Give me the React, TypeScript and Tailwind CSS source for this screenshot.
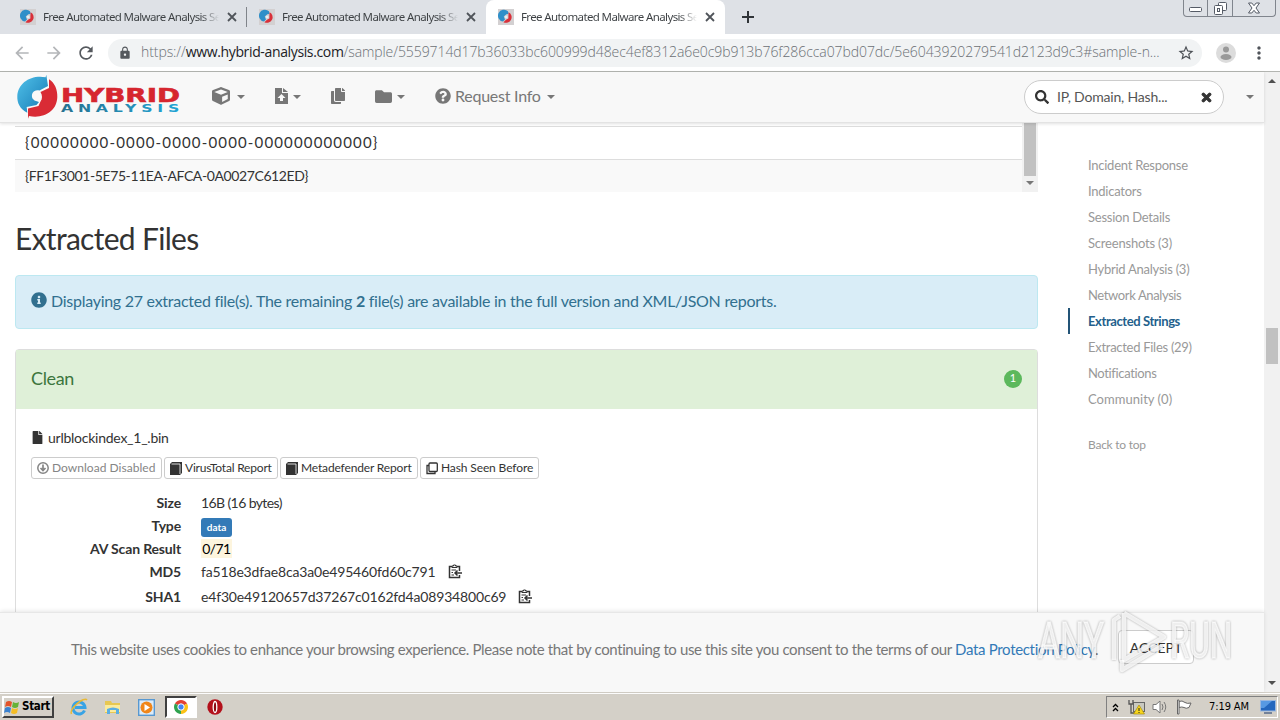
import type { ReactNode } from "react";
import {
  FaCopy,
  FaCube,
  FaFile,
  FaFolder,
  FaInfoCircle,
  FaQuestionCircle,
  FaSearch,
  FaTimes,
} from "react-icons/fa";
import {
  MdArrowBack,
  MdArrowForward,
  MdLock,
  MdMoreVert,
  MdRefresh,
  MdStarBorder,
} from "react-icons/md";

const tabs = [
  { title: "Free Automated Malware Analysis Se", active: false },
  { title: "Free Automated Malware Analysis Se", active: false },
  { title: "Free Automated Malware Analysis Se", active: true },
];

const sections = [
  { label: "Incident Response", spacing: "tracking-[-0.25px]" },
  { label: "Indicators", spacing: "tracking-[-0.25px]" },
  { label: "Session Details", spacing: "tracking-[-0.25px]" },
  { label: "Screenshots (3)", spacing: "tracking-[-0.2px]" },
  { label: "Hybrid Analysis (3)", spacing: "tracking-[-0.25px]" },
  { label: "Network Analysis", spacing: "tracking-[-0.38px]" },
  { label: "Extracted Strings", spacing: "tracking-[-0.4px]", active: true },
  { label: "Extracted Files (29)", spacing: "tracking-[-0.28px]" },
  { label: "Notifications", spacing: "tracking-[-0.35px]" },
  { label: "Community (0)", spacing: "tracking-[0.03px]" },
];

const SiteIcon = () => (
  <svg width="16" height="16" viewBox="0 0 16 16" className="shrink-0">
    <rect width="16" height="16" fill="#d3d0d1" />
    <path d="M10 2.2A6 6 0 1 0 5 12.6L7 10.4 5.8 7.6 8.4 5.2 10.6 5z" fill="#2f8fc9" />
    <path d="M10.6 3.2A5.6 5.6 0 1 1 5.4 13.2L8 10.8 10.4 9.6 10.4 6.8z" fill="#d9303a" />
    <circle cx="8.2" cy="8" r="1.3" fill="#dff1fa" />
  </svg>
);

const Caret = ({ className = "" }: { className?: string }) => (
  <svg width="8" height="4" viewBox="0 0 8 4" className={`shrink-0 ${className}`}>
    <path d="M0 0H8L4 4z" fill="#777" />
  </svg>
);

const TabStrip = () => (
  <div className="flex h-[34px] shrink-0 justify-between bg-[#dee1e6]">
    <div className="flex pl-2">
      {tabs.map((tab, i) => (
        <div
          key={i}
          className={`flex h-[34px] w-[239px] items-center pr-3 pl-3 ${
            tab.active ? "rounded-t-lg bg-white" : i === 0 ? "relative" : ""
          }`}
        >
          <SiteIcon />
          <span className="ml-[7px] w-[176px] shrink-0 overflow-hidden bg-gradient-to-r from-[#3c4043] from-90% to-transparent bg-clip-text font-['Noto_Sans'] text-[11.5px] tracking-[-0.62px] whitespace-nowrap text-transparent">
            {tab.title}
          </span>
          <svg width="10" height="10" viewBox="0 0 10 10" className="ml-2 shrink-0">
            <path d="M1 1L9 9M9 1L1 9" stroke="#50545a" strokeWidth="1.8" />
          </svg>
          {i === 0 && <span className="absolute right-0 h-5 w-px bg-[#80848a]" />}
        </div>
      ))}
      <svg width="12" height="12" viewBox="0 0 12 12" className="mt-[11px] ml-[17px]">
        <path d="M6 0V12M0 6H12" stroke="#303438" strokeWidth="2" />
      </svg>
    </div>
    <div className="mr-[4px] flex h-[17px] w-[93px] rounded-b border border-t-0 border-[#80858d]">
      <div className="flex w-6 items-center justify-center border-r border-[#80858d]">
        <svg width="13" height="5" viewBox="0 0 13 5" className="mt-[3px]">
          <rect x=".5" y=".5" width="12" height="4" rx="1" fill="#fff" stroke="#555b66" />
        </svg>
      </div>
      <div className="flex w-[25px] items-center justify-center border-r border-[#80858d]">
        <svg width="13" height="13" viewBox="0 0 13 13" fill="#fff" stroke="#555b66">
          <rect x="4.5" y=".5" width="8" height="8" rx="1" />
          <rect x=".5" y="3.5" width="8" height="9" rx="1" />
          <rect x="3.5" y="6.5" width="2" height="3" />
        </svg>
      </div>
      <div className="flex flex-1 items-center justify-center">
        <svg width="12" height="12" viewBox="0 0 12 12">
          <path d="M.5 1H3.8L6 3.7 8.2 1H11.5L8 6 11.5 11H8.2L6 8.3 3.8 11H.5L4 6z" fill="#fff" stroke="#555b66" />
        </svg>
      </div>
    </div>
  </div>
);

const AddressBar = () => (
  <div className="flex h-[38px] shrink-0 items-center border-b border-[#b3b5b1] bg-white">
    <MdArrowBack className="ml-3 text-[#b4b6b9]" size={20} />
    <MdArrowForward className="ml-3 text-[#b4b6b9]" size={20} />
    <MdRefresh className="ml-3 text-[#55595e]" size={20} />
    <div className="ml-3 flex h-[28px] w-[1094px] items-center rounded-full bg-[#f1f3f4]">
      <MdLock className="ml-2.5 shrink-0 text-[#55595e]" size={14} />
      <div className="-mt-0.5 ml-[9px] w-[1036px] font-['Open_Sans'] text-[14px] font-light tracking-[-0.08px] whitespace-nowrap text-[#6b7075]">
        https://<span className="font-normal tracking-[-0.36px] text-[#202124]">www.hybrid-analysis.com</span>
        /sample/5559714d17b36033bc600999d48ec4ef8312a6e0c9b913b76f286cca07bd07dc/5e6043920279541d2123d9c3#sample-n...
      </div>
      <MdStarBorder className="shrink-0 text-[#4d5156]" size={18} />
    </div>
    <svg width="20" height="20" viewBox="0 0 20 20" className="ml-[14px]">
      <circle cx="10" cy="10" r="10" fill="#dcdcdc" />
      <circle cx="10" cy="6.5" r="3" fill="#999" />
      <ellipse cx="10" cy="14" rx="5.5" ry="3" fill="#999" />
    </svg>
    <MdMoreVert className="ml-[13px] text-[#50545a]" size={20} />
  </div>
);

const Logo = () => (
  <svg width="166" height="46" viewBox="0 0 166 46" className="shrink-0">
    <defs>
      <linearGradient id="blue" x1="0" y1="0" x2="1" y2="1">
        <stop offset="0" stopColor="#52c2ea" />
        <stop offset="1" stopColor="#1479b4" />
      </linearGradient>
      <linearGradient id="teal" x1="0" y1="0" x2="1" y2="0">
        <stop offset="0" stopColor="#27718f" />
        <stop offset="1" stopColor="#22a6d8" />
      </linearGradient>
    </defs>
    <path
      d="M30.3 .7L32 12 23.5 16.5C18 15 14.5 19.5 16.5 24.5L18.5 26.5 23 28 20.5 31 10.7 33 11.3 38.7C4 35 1 29 1.3 22 2 9 15 .5 29.6 3.3z"
      fill="url(#blue)"
    />
    <path
      d="M33 5.3C39 9 41.5 16 41.3 23 41 37 28 45 13 42L12 44.7 12 34.5 22.5 32 24.5 27.5C26.5 25 26.5 21 24.5 18L33 14z"
      fill="#d92b35"
    />
    <g fontFamily="DejaVu Sans" fontWeight="700">
      <text
        x="45"
        y="27.5"
        fontSize="20"
        textLength="119"
        lengthAdjust="spacingAndGlyphs"
        fill="#d6262f"
        stroke="#d6262f"
        strokeWidth=".6"
      >
        HYBRID
      </text>
      <text
        x="45"
        y="37.5"
        fontSize="10"
        letterSpacing="3"
        textLength="123"
        lengthAdjust="spacingAndGlyphs"
        fill="url(#teal)"
      >
        ANALYSIS
      </text>
    </g>
  </svg>
);

const NavBar = () => (
  <header className="relative z-10 flex h-[51px] shrink-0 items-center border-b border-[#e3e3e3] bg-[#f8f8f8] text-[#777] shadow-[0_1px_3px_rgba(0,0,0,0.12)]">
    <div className="w-[212px] pl-[16px]">
      <Logo />
    </div>
    <FaCube size={18} className="-mt-0.5" />
    <Caret className="ml-[7px]" />
    <svg width="13" height="16" viewBox="0 0 13 16" className="-mt-0.5 ml-[30px]">
      <path
        fillRule="evenodd"
        fill="#777"
        d="M0 0H7V5H13V16H0zM6.5 6L2.5 10H5V13H8V10H10.5zM8 0L13 4H8z"
      />
    </svg>
    <Caret className="ml-[5px]" />
    <FaCopy size={16} className="-mt-0.5 ml-[29px]" />
    <FaFolder size={17} className="-mt-0.5 ml-[29px]" />
    <Caret className="ml-[5px]" />
    <FaQuestionCircle size={16} className="-mt-0.5 ml-[30px]" />
    <span className="-mt-0.5 ml-1 w-[88px] text-[16px] tracking-[-0.25px] whitespace-nowrap">Request Info</span>
    <Caret className="ml-1" />
    <div className="ml-[469px] flex h-[34px] w-[200px] items-center rounded-full border border-[#ccc] bg-white pr-[10px] pl-[10px]">
      <FaSearch size={14} className="text-[#333]" />
      <span className="-mt-0.5 ml-2 flex-1 text-[14px] tracking-[-0.18px] text-[#555]">IP, Domain, Hash...</span>
      <FaTimes size={13} className="text-[#333]" stroke="#333" strokeWidth={40} />
    </div>
    <Caret className="ml-[22px]" />
  </header>
);

const SmallButton = ({
  icon,
  muted = false,
  className,
  children,
}: {
  icon: ReactNode;
  muted?: boolean;
  className: string;
  children: ReactNode;
}) => (
  <button
    className={`flex h-[22px] items-center gap-[3px] rounded-[3px] border border-[#ccc] pl-[5px] text-[12px] whitespace-nowrap ${
      muted ? "text-[#858585]" : "text-[#333]"
    } ${className}`}
  >
    {icon}
    <span>{children}</span>
  </button>
);

const BookIcon = () => (
  <svg width="12" height="13" viewBox="0 0 12 13" className="shrink-0">
    <path d="M2 0H12V11L10 13H0V2z" fill="#333" />
    <path d="M1.5 2H10V12" fill="none" stroke="#fff" strokeWidth=".8" />
  </svg>
);

const ClipboardIcon = () => (
  <svg width="14" height="15" viewBox="0 0 14 15" fill="none" stroke="#333" className="ml-[11px]">
    <path d="M11.5 7V2.5H1.5V13.5H11.5V11" strokeWidth="1.5" />
    <path d="M4 3.5V2H5.5V1H7.5V2H9V3.5z" fill="#fff" />
    <path d="M3.5 6H8M3.5 8.5H5M3.5 11H6" strokeWidth="1" />
    <path d="M14 9H7M9.5 6.5L7 9 9.5 11.5" strokeWidth="1.5" />
  </svg>
);

const DetailRow = ({
  label,
  className = "h-[23px]",
  children,
}: {
  label: string;
  className?: string;
  children: ReactNode;
}) => (
  <div className={`flex items-center ${className}`}>
    <dt className="w-[150px] text-right font-bold tracking-[-0.15px] whitespace-nowrap">{label}</dt>
    <dd className="ml-5 flex items-center whitespace-nowrap">{children}</dd>
  </div>
);

const Results = () => (
  <div className="w-[1023px] shrink-0 text-[14px] text-[#333]">
    <div className="flex h-[69px]">
      <div className="w-[1007px] pt-[3px]">
        <div className="flex h-[33px] items-center border-t border-[#ddd] pb-0.5 pl-[10px]">
          <span className="text-[15px] tracking-[1.15px]">{"{00000000-0000-0000-0000-000000000000}"}</span>
        </div>
        <div className="flex h-[33px] items-center border-t border-[#ddd] bg-[#f9f9f9] pb-0.5 pl-[10px]">
          <span className="tracking-[-0.4px]">{"{FF1F3001-5E75-11EA-AFCA-0A0027C612ED}"}</span>
        </div>
      </div>
      <div className="flex w-4 flex-col items-center bg-[#f1f1f1]">
        <div className="h-[53px] w-3 bg-[#c1c1c1]" />
        <Caret className="mt-[5px]" />
      </div>
    </div>

    <h2 className="mt-[26px] h-[40px] text-[30px] leading-[40px] tracking-[-0.7px]">Extracted Files</h2>

    <div className="mt-[17px] flex h-[54px] items-center rounded border border-[#bce8f1] bg-[#d9edf7] pl-[15px] text-[#31708f]">
      <FaInfoCircle size={16} className="-mt-1" />
      <span className="-mt-0.5 ml-1 text-[16px] tracking-[-0.27px] whitespace-nowrap">
        Displaying 27 extracted file(s). The remaining <b>2</b> file(s) are available in the full version and
        XML/JSON reports.
      </span>
    </div>

    <div className="mt-5 h-[280px] rounded-t border border-[#ddd]">
      <div className="flex h-[59px] items-center justify-between bg-[#dff0d8] px-[15px] pb-0.5 text-[#3c763d]">
        <span className="text-[18px] tracking-[-0.35px]">Clean</span>
        <span className="flex size-[18px] items-center justify-center rounded-full bg-[#5cb85c] text-[11px] text-white">
          1
        </span>
      </div>
      <div className="px-[15px] pt-[17px]">
        <div className="flex h-6 items-center">
          <FaFile size={13} className="-mt-0.5" />
          <span className="-mt-px ml-1 tracking-[-0.25px]">urlblockindex_1_.bin</span>
        </div>
        <div className="mt-[7px] flex">
          <SmallButton
            muted
            className="w-[131px] tracking-[0.03px]"
            icon={
              <svg width="12" height="12" viewBox="0 0 12 12" fill="none" stroke="currentColor">
                <circle cx="6" cy="6" r="5.2" strokeWidth="1.5" />
                <path d="M6 2.5V8M3.5 6L6 8.5 8.5 6" strokeWidth="1.7" />
              </svg>
            }
          >
            Download Disabled
          </SmallButton>
          <SmallButton className="ml-[2px] w-[114px] tracking-[-0.2px]" icon={<BookIcon />}>
            VirusTotal Report
          </SmallButton>
          <SmallButton className="ml-[2px] w-[138px] tracking-[-0.15px]" icon={<BookIcon />}>
            Metadefender Report
          </SmallButton>
          <SmallButton
            className="ml-[2px] w-[119px] tracking-[-0.12px]"
            icon={
              <svg width="12" height="13" viewBox="0 0 12 13" fill="none" stroke="#333" strokeWidth="1.3">
                <rect x="3" y="1" width="8.3" height="8.5" rx="1" />
                <path d="M3 3.5H1V11.5H9V9.5" />
              </svg>
            }
          >
            Hash Seen Before
          </SmallButton>
        </div>
        <dl className="mt-[12px]">
          <DetailRow label="Size">
            <span className="tracking-[-0.6px]">16B (16 bytes)</span>
          </DetailRow>
          <DetailRow label="Type">
            <span className="mt-[3px] flex h-[19px] w-[31px] items-center justify-center rounded-[3px] bg-[#337ab7] text-[10px] font-bold text-white">
              data
            </span>
          </DetailRow>
          <DetailRow label="AV Scan Result">
            <span className="flex h-[19px] w-[31px] items-center justify-center bg-[#fdf5de] tracking-[-0.6px] text-black">
              0/71
            </span>
          </DetailRow>
          <DetailRow label="MD5">
            <span className="w-[236px] tracking-[-0.16px]">fa518e3dfae8ca3a0e495460fd60c791</span>
            <ClipboardIcon />
          </DetailRow>
          <DetailRow label="SHA1" className="h-[26px]">
            <span className="w-[306px] tracking-[-0.17px]">e4f30e49120657d37267c0162fd4a08934800c69</span>
            <ClipboardIcon />
          </DetailRow>
        </dl>
      </div>
    </div>
  </div>
);

const SectionNav = () => (
  <nav className="ml-[30px] pt-[29px] text-[13px] text-[#999]">
    {sections.map((item) => (
      <a
        key={item.label}
        className={`flex h-[26px] items-center pt-0.5 whitespace-nowrap ${item.spacing} ${
          item.active ? "border-l-2 border-[#235477] pl-[18px] font-bold text-[#235f8c]" : "pl-5"
        }`}
      >
        {item.label}
      </a>
    ))}
    <a className="mt-[23px] block pl-5 text-[12px] leading-[20px] tracking-[-0.25px]">Back to top</a>
  </nav>
);

// Watermark laid over the cookie bar
const Watermark = () => (
  <svg
    width="204"
    height="68"
    viewBox="0 0 204 68"
    className="pointer-events-none absolute right-[26px] bottom-[16px] drop-shadow-[0_0_1px_rgba(0,0,0,0.4)]"
  >
    <g fill="#fff" fillOpacity=".8" stroke="#fff" strokeOpacity=".6" strokeWidth="1.5" fontFamily="Roboto" fontSize="50">
      <text x="4" y="50" textLength="66" lengthAdjust="spacingAndGlyphs">
        ANY
      </text>
      <text x="136" y="50" textLength="62" lengthAdjust="spacingAndGlyphs">
        RUN
      </text>
    </g>
    <g fill="none" stroke="#fff" strokeOpacity=".8" strokeWidth="4.5" strokeLinejoin="round">
      <path d="M90 5L130 29 90 52 90 5" />
      <path d="M86 8L80 12V52M88 52V62L128 38" />
    </g>
  </svg>
);

const CookieBar = () => (
  <footer className="relative z-10 flex h-[80px] shrink-0 items-center border-t border-[#e7e7e7] bg-[#f8f8f8] pb-[7px] pl-[71px] text-[#777] shadow-[0_-1px_4px_rgba(0,0,0,0.1)]">
    <span className="w-[1047px] text-[15px] tracking-[-0.383px] whitespace-nowrap">
      This website uses cookies to enhance your browsing experience. Please note that by continuing to use this
      site you consent to the terms of our{" "}
      <a className="tracking-[-0.32px] text-[#337ab7]">Data Protection Policy</a>.
    </span>
    <button className="-mt-1 h-[34px] w-[76px] rounded border border-[#ccc] bg-white text-[14px] text-[#333]">
      ACCEPT
    </button>
    <Watermark />
  </footer>
);

const PageScrollbar = () => (
  <div className="flex w-4 flex-col items-center bg-[#f1f1f1]">
    <svg width="8" height="4" viewBox="0 0 8 4" className="mt-[7px]">
      <path d="M0 4H8L4 0z" fill="#505050" />
    </svg>
    <div className="mt-[245px] h-[36px] w-3 bg-[#c1c1c1]" />
    <svg width="8" height="4" viewBox="0 0 8 4" className="mt-auto mb-[7px]">
      <path d="M0 0H8L4 4z" fill="#505050" />
    </svg>
  </div>
);

const Taskbar = () => (
  <div className="flex h-[28px] shrink-0 items-center border-t border-[#d4d0c8] bg-[#d4d0c8] pt-px font-['DejaVu_Sans_Condensed','DejaVu_Sans'] text-[11px] text-black shadow-[inset_0_1px_0_#fff]">
    <button className="ml-[2px] flex h-[22px] w-[52px] items-center border-2 border-t-white border-r-[#404040] border-b-[#404040] border-l-white font-bold">
      <svg width="16" height="16" viewBox="0 0 16 16" className="shrink-0">
        <path d="M2 3Q5 1 8 3L7 8Q4 6 1 8z" fill="#e3542b" />
        <path d="M9 3Q12 5 15 3L14 8Q11 10 8 8z" fill="#65b237" />
        <path d="M1 9Q4 7 7 9L6 14Q3 12 0 14z" fill="#3b82d0" />
        <path d="M8 9Q11 11 14 9L13 14Q10 16 7 14z" fill="#f4bd25" />
      </svg>
      <span className="ml-0.5 text-[11.5px] tracking-[-0.3px]">Start</span>
    </button>
    {/* Internet Explorer */}
    <svg width="18" height="18" viewBox="0 0 18 18" className="ml-[16px]" fill="none">
      <path d="M14.5 12.5A6 6 0 1 1 15 9.5H5" stroke="#38a3e5" strokeWidth="3" />
      <path d="M1.5 16C-1 11 14-2 17 2" stroke="#e8b935" strokeWidth="1.5" />
    </svg>
    {/* Explorer folder */}
    <svg width="18" height="18" viewBox="0 0 18 18" className="ml-4">
      <path d="M1 3H7L8 5H16V15H1z" fill="#e7c752" />
      <path d="M1 7H16V14H1z" fill="#fbeb9c" />
      <path d="M3 16V11Q9 8 15 11V16H12V12H6V16z" fill="#5aaee3" />
    </svg>
    {/* Media Player */}
    <svg width="17" height="17" viewBox="0 0 17 17" className="ml-4">
      <rect x=".7" y=".7" width="15.6" height="15.6" fill="#dcecf9" stroke="#5798d1" strokeWidth="1.4" />
      <circle cx="8.5" cy="8.5" r="6" fill="#f08619" />
      <path d="M6.5 5L12 8.5 6.5 12z" fill="#fff" />
    </svg>
    <div className="ml-[10px] flex h-[22px] w-8 items-center justify-center border-2 border-t-[#404040] border-r-white border-b-white border-l-[#404040] bg-white">
      <svg width="14" height="14" viewBox="0 0 14 14">
        <path d="M7 7L.94 3.5A7 7 0 0 1 13.06 3.5z" fill="#e34133" />
        <path d="M7 7L13.06 3.5A7 7 0 0 1 7 14z" fill="#fbc116" />
        <path d="M7 7V14A7 7 0 0 1 .94 3.5z" fill="#2fa34f" />
        <circle cx="7" cy="7" r="3.2" fill="#4285f4" stroke="#fff" />
      </svg>
    </div>
    {/* Opera */}
    <svg width="16" height="16" viewBox="0 0 16 16" className="ml-[10px]">
      <circle cx="8" cy="8" r="7.7" fill="#b3101b" />
      <ellipse cx="8" cy="8" rx="1.8" ry="5.5" fill="#8c0912" stroke="#fff" strokeWidth="1.3" />
    </svg>
    <div className="mr-[2px] ml-auto flex h-[22px] w-[172px] items-center border border-t-[#808080] border-r-white border-b-white border-l-[#808080] pl-[5px]">
      <svg width="7" height="9" viewBox="0 0 7 9" fill="none" stroke="#000" strokeWidth="1.3">
        <path d="M1 4L3.5 1.5 6 4M1 8L3.5 5.5 6 8" />
      </svg>
      <svg width="18" height="16" viewBox="0 0 18 16" className="ml-[9px]">
        <rect x="5.5" y="3.5" width="11" height="9" fill="#c9c9c0" stroke="#666" />
        <path d="M1 1V5H5V1M3 5V14H7" fill="none" stroke="#555" strokeWidth="1.3" />
        <path d="M11 6L16.5 15H5.5z" fill="#f7d51d" stroke="#9c8200" strokeWidth=".6" />
        <path d="M11 9V12M11 13V14" stroke="#222" />
      </svg>
      <svg width="17" height="16" viewBox="0 0 17 16" className="ml-[6px]" fill="none" stroke="#777">
        <path d="M1 5.5H4L8 2V14L4 10.5H1z" fill="#fff" />
        <path d="M10 5Q12 8 10 11M12 3Q15.5 8 12 13" />
      </svg>
      <svg width="17" height="16" viewBox="0 0 17 16" className="ml-[7px]" fill="#fff" stroke="#666">
        <path d="M3 2.5Q6 1 9 3.5 11 5 15 4L13 8.5Q10 10 8 8.5 6 7.5 3 8.5z" />
        <path d="M1.5 1H3V15H1.5z" />
      </svg>
      <span className="ml-[16px] w-[42px] tracking-[-0.1px] whitespace-nowrap">7:19 AM</span>
      <svg width="16" height="14" viewBox="0 0 16 14" className="ml-[9px]">
        <rect x=".5" y=".5" width="15" height="10.5" fill="#2467be" stroke="#9ab7df" />
        <path d="M1 1H12L4 8H1z" fill="#5799e3" />
        <path d="M4 13H12" stroke="#55688a" strokeWidth="1.5" />
      </svg>
    </div>
  </div>
);

const App = () => {
  return (
    <div className="flex h-[720px] w-[1280px] flex-col overflow-hidden bg-white">
      <TabStrip />
      <AddressBar />
      <div className="flex h-[620px]">
        <div className="flex w-[1264px] flex-col font-['Lato',sans-serif]">
          <NavBar />
          <main className="flex h-[489px] overflow-hidden pl-[15px]">
            <Results />
            <SectionNav />
          </main>
          <CookieBar />
        </div>
        <PageScrollbar />
      </div>
      <Taskbar />
    </div>
  );
};

export default App;
